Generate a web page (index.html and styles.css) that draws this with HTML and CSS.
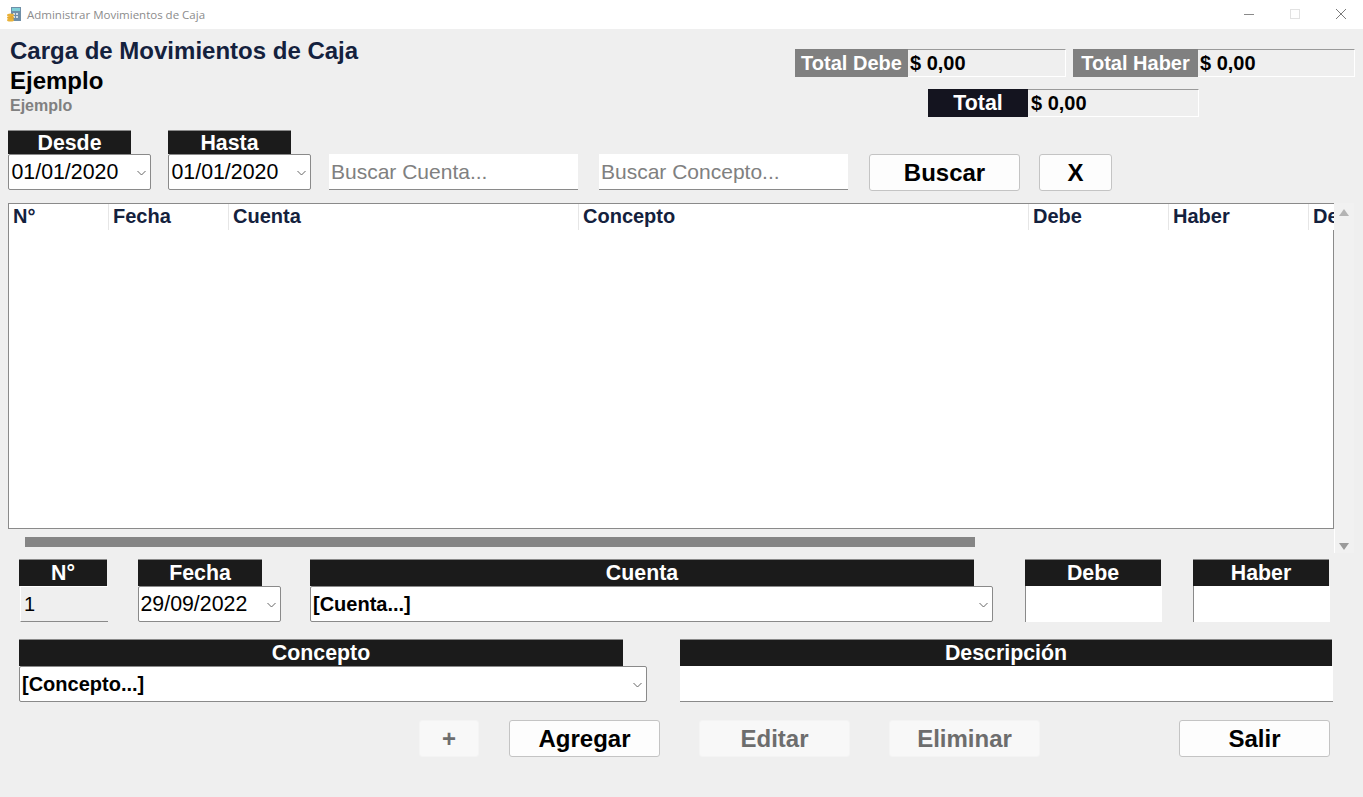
FILE: index.html
```html
<!DOCTYPE html>
<html lang="es">
<head>
    <meta charset="UTF-8">
    <meta name="viewport" content="width=device-width, initial-scale=1.0">
    <title>Administrar Movimientos de Caja</title>
    <link rel="stylesheet" href="styles.css">
</head>
<body>
    <header class="titlebar">
        <svg class="app-icon" width="16" height="16" viewBox="0 0 16 16">
            <rect x="5" y="1" width="10" height="14" fill="#6f8fa8"/>
            <rect x="6" y="2" width="8" height="3" fill="#7fd0d8"/>
            <path d="M7 7h2v2H7zM10 7h2v2h-2zM7 10h2v2H7zM10 10h2v2h-2z" fill="#d5dde4"/>
            <ellipse cx="4.5" cy="9" rx="3.5" ry="1.6" fill="#e8b23a"/>
            <ellipse cx="4.5" cy="11.5" rx="3.5" ry="1.6" fill="#e8a92c"/>
            <ellipse cx="4.5" cy="14" rx="3.5" ry="1.6" fill="#e8b23a"/>
        </svg>
        <span class="app-title">Administrar Movimientos de Caja</span>
        <div class="win-buttons">
            <svg width="12" height="12" viewBox="0 0 12 12"><path d="M1 6.5h10" stroke="#8a8a8a" fill="none"/></svg>
            <svg width="12" height="12" viewBox="0 0 12 12"><rect x="1.5" y="1.5" width="9" height="9" stroke="#e2e2e2" fill="none"/></svg>
            <svg width="12" height="12" viewBox="0 0 12 12"><path d="M1 1l10 10M11 1L1 11" stroke="#7a7a7a" fill="none"/></svg>
        </div>
    </header>

    <main class="window">
        <section class="top">
            <div class="headings">
                <h1>Carga de Movimientos de Caja</h1>
                <h2>Ejemplo</h2>
                <h3>Ejemplo</h3>
            </div>
            <div class="totals">
                <div class="totals-row">
                    <div class="total total-debe">
                        <span class="total-label">Total Debe</span>
                        <span class="total-value">$ 0,00</span>
                    </div>
                    <div class="total total-haber">
                        <span class="total-label">Total Haber</span>
                        <span class="total-value">$ 0,00</span>
                    </div>
                </div>
                <div class="total total-final">
                    <span class="total-label">Total</span>
                    <span class="total-value">$ 0,00</span>
                </div>
            </div>
        </section>

        <section class="filters">
            <div class="field f-date">
                <span class="label">Desde</span>
                <div class="control">01/01/2020
                    <svg class="chev" width="9" height="6" viewBox="0 0 9 6"><path d="M.5 1l4 4 4-4" stroke="#666" fill="none"/></svg>
                </div>
            </div>
            <div class="field f-date">
                <span class="label">Hasta</span>
                <div class="control">01/01/2020
                    <svg class="chev" width="9" height="6" viewBox="0 0 9 6"><path d="M.5 1l4 4 4-4" stroke="#666" fill="none"/></svg>
                </div>
            </div>
            <input class="search s-cuenta" type="text" placeholder="Buscar Cuenta...">
            <input class="search s-concepto" type="text" placeholder="Buscar Concepto...">
            <button type="button" class="btn btn-buscar">Buscar</button>
            <button type="button" class="btn btn-x">X</button>
        </section>

        <section class="grid-area">
            <div class="table">
                <div class="table-head">
                    <div class="th w-num">N°</div>
                    <div class="th w-fecha">Fecha</div>
                    <div class="th w-cuenta">Cuenta</div>
                    <div class="th w-concepto">Concepto</div>
                    <div class="th w-monto">Debe</div>
                    <div class="th w-monto">Haber</div>
                    <div class="th w-desc">Descripción</div>
                </div>
                <div class="table-body"></div>
            </div>
            <div class="vscroll">
                <svg width="10" height="7" viewBox="0 0 10 7"><path d="M5 0l5 7H0z" fill="#b4b4b4"/></svg>
                <svg width="10" height="7" viewBox="0 0 10 7"><path d="M0 0h10L5 7z" fill="#9a9a9a"/></svg>
            </div>
        </section>
        <div class="hscroll"><div class="hscroll-thumb"></div></div>

        <section class="form-row row-one">
            <div class="field f-num">
                <span class="label">N°</span>
                <div class="plain readonly">1</div>
            </div>
            <div class="field f-fecha">
                <span class="label">Fecha</span>
                <div class="control">29/09/2022
                    <svg class="chev" width="9" height="6" viewBox="0 0 9 6"><path d="M.5 1l4 4 4-4" stroke="#666" fill="none"/></svg>
                </div>
            </div>
            <div class="field f-cuenta">
                <span class="label">Cuenta</span>
                <div class="control bold">[Cuenta...]
                    <svg class="chev" width="9" height="6" viewBox="0 0 9 6"><path d="M.5 1l4 4 4-4" stroke="#666" fill="none"/></svg>
                </div>
            </div>
            <div class="field f-monto">
                <span class="label">Debe</span>
                <div class="plain"></div>
            </div>
            <div class="field f-monto">
                <span class="label">Haber</span>
                <div class="plain"></div>
            </div>
        </section>

        <section class="form-row row-two">
            <div class="field f-concepto">
                <span class="label">Concepto</span>
                <div class="control bold">[Concepto...]
                    <svg class="chev" width="9" height="6" viewBox="0 0 9 6"><path d="M.5 1l4 4 4-4" stroke="#666" fill="none"/></svg>
                </div>
            </div>
            <div class="field f-descripcion">
                <span class="label">Descripción</span>
                <div class="plain desc"></div>
            </div>
        </section>

        <section class="actions">
            <button type="button" class="btn off b-plus">+</button>
            <button type="button" class="btn b-agregar">Agregar</button>
            <button type="button" class="btn off b-editar">Editar</button>
            <button type="button" class="btn off b-eliminar">Eliminar</button>
            <button type="button" class="btn b-salir">Salir</button>
        </section>
    </main>
</body>
</html>
```

FILE: styles.css
```css
* {
    box-sizing: border-box;
}
html, body {
    height: 100%;
}
body {
    margin: 0;
    background-color: #efefef;
    font-family: "Liberation Sans", Arial, sans-serif;
    overflow: hidden;
}

/* barra de titulo */
.titlebar {
    display: flex;
    align-items: center;
    height: 29px;
    padding-left: 6px;
    padding-bottom: 1px;
    background-color: #fff;
}
.app-icon {
    margin-right: 5px;
}
.app-title {
    font-family: "Open Sans", sans-serif;
    font-size: 11.5px;
    color: #8c8c8c;
}
.win-buttons {
    display: flex;
    gap: 34px;
    margin-left: auto;
    padding-right: 16px;
}

.window {
    padding-left: 8px;
}

/* encabezado */
.top {
    display: flex;
    justify-content: space-between;
    height: 101px;
}
.headings {
    padding: 8px 0 0 2px;
}
h1, h2, h3 {
    margin: 0;
    font-weight: bold;
}
h1 {
    font-size: 24px;
    line-height: 28px;
    color: #14213d;
}
h2 {
    font-size: 24px;
    line-height: 32px;
    color: #000;
}
h3 {
    font-size: 16px;
    line-height: 17px;
    color: #808080;
}
.totals {
    display: flex;
    flex-direction: column;
    gap: 12px;
    width: 568px;
    padding-top: 20px;
}
.totals-row {
    display: flex;
    gap: 7px;
}
.total {
    display: flex;
    height: 28px;
    font-size: 20px;
    font-weight: bold;
}
.total-label {
    display: flex;
    align-items: center;
    justify-content: center;
    color: #fff;
}
.total-value {
    display: flex;
    align-items: center;
    padding-left: 2px;
    border-top: 1px solid #9a9a9a;
    border-right: 1px solid #fff;
    border-bottom: 1px solid #fff;
    color: #000;
}
.total-debe .total-label, .total-haber .total-label {
    background-color: #808080;
}
.total-debe .total-label {
    width: 113px;
}
.total-debe .total-value {
    width: 158px;
}
.total-haber .total-label {
    width: 125px;
}
.total-haber .total-value {
    width: 157px;
}
.total-final {
    margin-left: 133px;
}
.total-final .total-label {
    width: 100px;
    font-size: 21.33px;
    background-color: #14141f;
}
.total-final .total-value {
    width: 171px;
    padding-left: 3px;
}

/* campos */
.field {
    display: flex;
    flex-direction: column;
}
.label {
    height: 27px;
    border-top: 1px solid #8a8a8a;
    background-color: #1b1b1b;
    color: #fff;
    font-size: 21.33px;
    font-weight: bold;
    line-height: 26px;
    text-align: center;
}
.control {
    position: relative;
    display: flex;
    align-items: center;
    height: 36px;
    padding-left: 2px;
    border: 1px solid #8a8a8a;
    border-radius: 2px;
    background-color: #fff;
    color: #000;
    font-size: 21.33px;
}
.f-date .control {
    padding-left: 2.5px;
}
.f-fecha .control {
    padding-left: 1.5px;
}
.control.bold {
    font-size: 20px;
    font-weight: bold;
}
.chev {
    position: absolute;
    right: 4px;
    top: 15px;
}
.plain {
    height: 36px;
    margin-right: -1px;
    padding-left: 4px;
    background-color: #fff;
    border-left: 1px solid #8a8a8a;
    font-size: 20px;
    line-height: 36px;
}
.plain.readonly {
    margin-left: 1px;
    margin-right: 0;
    padding-left: 3px;
    background-color: #efefef;
    border-left: 1px solid #fff;
    border-top: 1px solid #fff;
    border-bottom: 1px solid #8a8a8a;
    line-height: 34px;
}
.plain.desc {
    margin-right: 0;
    border-left: 0;
    border-bottom: 1px solid #8a8a8a;
}

/* filtros */
.filters {
    display: flex;
    align-items: flex-end;
    height: 60px;
}
.f-date {
    width: 143px;
    margin-right: 17px;
}
.f-date .label {
    width: 123px;
    height: 24px;
    line-height: 24px;
}
.search {
    width: 249px;
    height: 36px;
    margin-left: 1px;
    padding: 0 2px;
    border: 0;
    border-bottom: 1px solid #8a8a8a;
    background-color: #fff;
    color: #000;
    font-family: "Liberation Sans", Arial, sans-serif;
    font-size: 21px;
}
.search::placeholder {
    color: #808080;
    opacity: 1;
}
.s-cuenta {
    margin-right: 21px;
}
.s-concepto {
    margin-left: 0;
    margin-right: 21px;
}
.btn {
    height: 37px;
    border: 1px solid #c4c4c4;
    border-radius: 3px;
    background-color: #fdfdfd;
    color: #000;
    font-family: "Liberation Sans", Arial, sans-serif;
    font-size: 24px;
    font-weight: bold;
    padding: 0;
}
.btn.off {
    border-color: #f4f4f4;
    background-color: #f8f8f8;
    color: #6d6d6d;
}
.btn-buscar {
    width: 151px;
    margin-right: 19px;
    margin-bottom: -1px;
}
.btn-x {
    width: 73px;
    margin-bottom: -1px;
}

/* tabla */
.grid-area {
    display: flex;
    margin-top: 13px;
}
.table {
    display: flex;
    flex-direction: column;
    width: 1326px;
    height: 326px;
    border: 1px solid #8a8a8a;
    border-right: 0;
    background-color: #fff;
    overflow: hidden;
}
.table-head {
    display: flex;
    flex: none;
    height: 26px;
}
.table-body {
    flex: 1;
    border-right: 1px solid #8a8a8a;
}
.th {
    flex: none;
    padding-left: 4px;
    border-right: 1px solid #e6e6e6;
    color: #14213d;
    font-size: 20px;
    font-weight: bold;
    line-height: 25px;
    white-space: nowrap;
}
.w-num {
    width: 100px;
}
.w-fecha {
    width: 120px;
}
.w-cuenta {
    width: 350px;
}
.w-concepto {
    width: 450px;
}
.w-monto {
    width: 140px;
}
.w-desc {
    width: 200px;
    border-right: 0;
}
.vscroll {
    position: relative;
    display: flex;
    flex-direction: column;
    align-items: center;
    justify-content: space-between;
    width: 20px;
    height: 350px;
    padding-top: 6px;
    padding-bottom: 3px;
    background-color: #f1f1f1;
}
.vscroll::after {
    content: "";
    position: absolute;
    left: 0;
    bottom: 0;
    width: 1px;
    height: 24px;
    background-color: #fff;
}
.hscroll {
    height: 10px;
    margin-top: -16px;
    padding-left: 17px;
}
.hscroll-thumb {
    width: 950px;
    height: 10px;
    background-color: #858585;
}

/* formulario */
.form-row {
    display: flex;
    padding-left: 11px;
}
.row-one {
    margin-top: 12px;
    gap: 30px;
}
.row-two {
    margin-top: 17px;
    gap: 33px;
}
.f-num {
    width: 89px;
}
.f-num .label {
    width: 88px;
}
.f-fecha {
    width: 143px;
    margin-right: -1px;
}
.f-fecha .label {
    width: 124px;
}
.f-cuenta {
    width: 683px;
}
.f-cuenta .label {
    width: 664px;
}
.f-monto {
    width: 136px;
    margin-left: 2px;
}
.f-concepto {
    width: 628px;
}
.f-concepto .label {
    width: 604px;
}
.f-descripcion {
    width: 653px;
}
.f-descripcion .label {
    width: 652px;
}

/* botones */
.actions {
    display: flex;
    gap: 39px;
    margin-top: 18px;
    padding-left: 411px;
}
.b-plus {
    width: 60px;
    margin-right: -9px;
}
.b-agregar, .b-editar, .b-eliminar, .b-salir {
    width: 151px;
}
.b-salir {
    margin-left: 100px;
}
```
